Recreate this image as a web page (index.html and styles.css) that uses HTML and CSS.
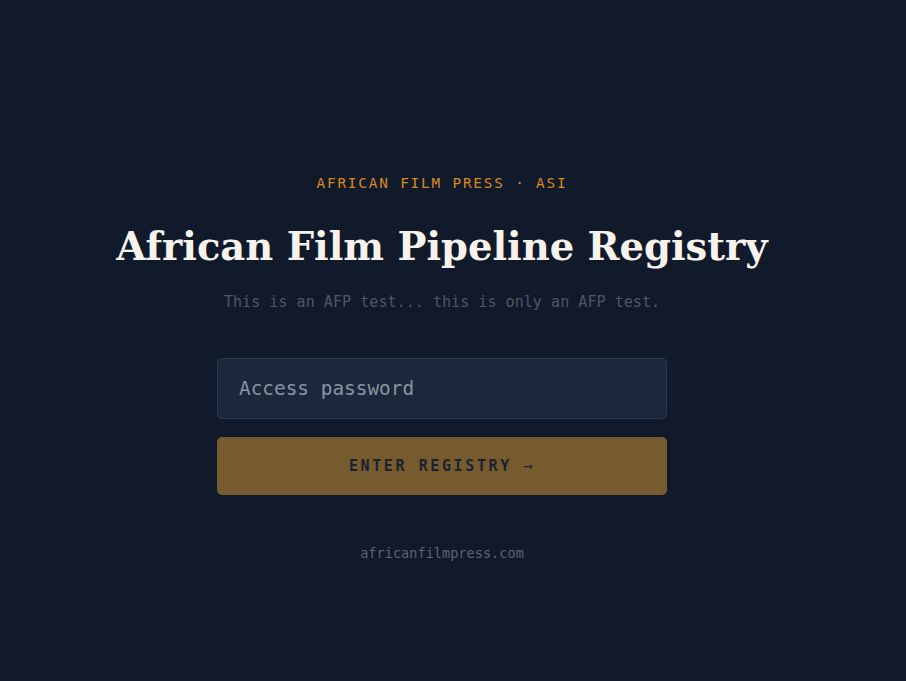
FILE: index.html
```html
<!DOCTYPE html>
<html lang="en">
<head>
    <meta charset="UTF-8">
    <meta name="viewport" content="width=device-width, initial-scale=1.0">
    <title>African Film Pipeline Registry</title>
    <link rel="stylesheet" href="styles.css">
</head>
<body>

    <div class="gate">
        <div class="eyebrow">African Film Press · ASI</div>
        <h1 class="title">African Film Pipeline Registry</h1>
        <p class="tagline">This is an AFP test... this is only an AFP test.</p>

        <form class="login" onsubmit="return false">
            <input type="password" class="password" placeholder="Access password">
            <button type="submit" class="enter">Enter Registry <span class="arrow">→</span></button>
        </form>

        <div class="site">africanfilmpress.com</div>
    </div>

</body>
</html>
```

FILE: styles.css
```css
html, body {
    margin: 0;
    height: 100%;
}
body {
    background-color: #111a2a;
    font-family: "DejaVu Sans Mono", monospace;
    display: flex;
    justify-content: center;
    padding-right: 22px;
}
.gate {
    display: flex;
    flex-direction: column;
    align-items: center;
    padding-top: 175px;
}
.eyebrow {
    color: #d8891d;
    font-size: 14.3px;
    letter-spacing: 1.85px;
    text-transform: uppercase;
}
.title {
    font-family: "DejaVu Serif", Georgia, serif;
    font-weight: bold;
    font-size: 38.5px;
    color: #f7f3ec;
    margin: 33px 0 0;
}
.tagline {
    color: #4f5663;
    font-size: 15.1px;
    margin: 24px 0 0;
}
.login {
    display: flex;
    flex-direction: column;
    gap: 18px;
    width: 450px;
    margin-top: 47px;
}
.password {
    height: 61px;
    box-sizing: border-box;
    padding: 0 21px;
    background: #1b283b;
    border: 1px solid #2b3a50;
    border-radius: 5px;
    font-family: "DejaVu Sans Mono", monospace;
    font-size: 19.4px;
    color: #e5e7eb;
}
.password::placeholder {
    color: #8a93a2;
}
.enter {
    height: 58px;
    background: #765b2f;
    border: none;
    border-radius: 5px;
    font-family: "DejaVu Sans Mono", monospace;
    font-weight: bold;
    font-size: 15px;
    letter-spacing: 2.6px;
    text-transform: uppercase;
    color: #1b2231;
    cursor: pointer;
}
.arrow {
    font-weight: normal;
}
.site {
    margin-top: 50px;
    color: #5c6472;
    font-size: 13.6px;
}
```
